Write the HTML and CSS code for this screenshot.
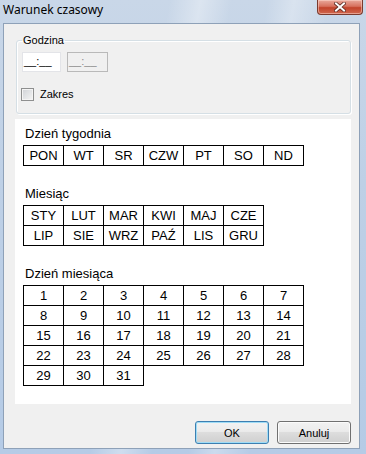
FILE: index.html
```html
<!DOCTYPE html>
<html lang="pl">
<head>
    <meta charset="UTF-8">
    <meta name="viewport" content="width=device-width, initial-scale=1.0">
    <title>Warunek czasowy</title>
    <link rel="stylesheet" href="styles.css">
</head>
<body>
    <div class="window">
        <div class="titlebar">
            <span class="title">Warunek czasowy</span>
            <button class="close" type="button">
                <svg width="12" height="10" viewBox="0 0 12 10">
                    <path d="M2 1.5 L10 8.5 M10 1.5 L2 8.5" stroke="#5b2a22" stroke-width="3.6" stroke-linecap="square" fill="none"/>
                    <path d="M2 1.5 L10 8.5 M10 1.5 L2 8.5" stroke="#ffffff" stroke-width="2" stroke-linecap="square" fill="none"/>
                </svg>
            </button>
        </div>
        <div class="client">
            <fieldset class="group">
                <legend>Godzina</legend>
                <div class="times">
                    <div class="time-input">__:__</div>
                    <div class="time-input disabled">__:__</div>
                </div>
                <label class="check"><span class="check-box"></span>Zakres</label>
            </fieldset>

            <div class="panel">
                <div class="caption">Dzień tygodnia</div>
                <table class="grid">
                    <tr><td>PON</td><td>WT</td><td>SR</td><td>CZW</td><td>PT</td><td>SO</td><td>ND</td></tr>
                </table>

                <div class="caption">Miesiąc</div>
                <table class="grid">
                    <tr><td>STY</td><td>LUT</td><td>MAR</td><td>KWI</td><td>MAJ</td><td>CZE</td></tr>
                    <tr><td>LIP</td><td>SIE</td><td>WRZ</td><td>PAŹ</td><td>LIS</td><td>GRU</td></tr>
                </table>

                <div class="caption">Dzień miesiąca</div>
                <table class="grid">
                    <tr><td>1</td><td>2</td><td>3</td><td>4</td><td>5</td><td>6</td><td>7</td></tr>
                    <tr><td>8</td><td>9</td><td>10</td><td>11</td><td>12</td><td>13</td><td>14</td></tr>
                    <tr><td>15</td><td>16</td><td>17</td><td>18</td><td>19</td><td>20</td><td>21</td></tr>
                    <tr><td>22</td><td>23</td><td>24</td><td>25</td><td>26</td><td>27</td><td>28</td></tr>
                    <tr><td>29</td><td>30</td><td>31</td></tr>
                </table>
            </div>

            <div class="buttons">
                <button class="btn default" type="button">OK</button>
                <button class="btn" type="button">Anuluj</button>
            </div>
        </div>
    </div>
</body>
</html>
```

FILE: styles.css
```css
* {
    box-sizing: border-box;
}

body {
    margin: 0;
    font-family: 'Liberation Sans', Arial, sans-serif;
    background: #bcd0e6;
}

.window {
    width: 366px;
    height: 454px;
    display: flex;
    flex-direction: column;
    background:
        linear-gradient(100deg, transparent 38%, rgba(255, 255, 255, 0.35) 45%, transparent 52%, transparent 60%, rgba(255, 255, 255, 0.3) 66%, transparent 74%),
        linear-gradient(#c9d7e8, #bed0e6 40%, #b5cbe6);
}

.titlebar {
    height: 23px;
    display: flex;
    align-items: flex-start;
}

.titlebar > .title {
    font-family: 'Noto Sans', sans-serif;
    font-size: 12px;
    line-height: 16px;
    padding: 2px 0 0 3px;
    color: #000;
}

.titlebar > .close {
    margin: 0 3px 0 auto;
    width: 46px;
    height: 15px;
    padding: 0;
    display: flex;
    align-items: center;
    justify-content: center;
    border: 1px solid #7b3a2e;
    border-top: none;
    border-radius: 0 0 4px 4px;
    background: linear-gradient(#e9a99c, #d7715e 45%, #c2432b 55%, #d0684f);
    box-shadow: inset 0 0 0 1px rgba(255, 220, 210, 0.5);
}

.client {
    flex: 1;
    margin: 0 6px 5px 3px;
    border: 1px solid #8ea1b8;
    background: #f0f0f0;
    display: flex;
    flex-direction: column;
}

/* group box */
.group {
    margin: 10px 8px 0 12px;
    padding: 5px 5px 12px 5px;
    border: 1px solid #d5dfe5;
    border-radius: 3px;
    box-shadow: inset 1px 1px 0 #fff, 1px 1px 0 #fff;
    font-size: 11px;
    min-width: 0;
}

.group > legend {
    padding: 0 1px;
    line-height: 13px;
    color: #000;
}

.times {
    display: flex;
    gap: 6px;
}

.time-input {
    width: 39px;
    height: 20px;
    border: 1px solid #e3e4e8;
    background: #fff;
    line-height: 17px;
    padding-left: 1px;
    color: #000;
}

.time-input.disabled {
    width: 41px;
    border-color: #b9b9b9;
    background: #f0f0f0;
    color: #8a8a8a;
}

.check {
    display: flex;
    align-items: center;
    gap: 6px;
    margin: 16px 0 0 -1px;
    line-height: 13px;
}

.check-box {
    width: 13px;
    height: 13px;
    border: 1px solid #8e8f8f;
    background: linear-gradient(135deg, #cfd2d6, #f5f5f5);
    box-shadow: inset 0 0 0 1px #f4f4f4;
}

/* white panel with tables */
.panel {
    margin: 5px 8px 0 11px;
    padding: 7px 8px 18px 8px;
    background: #fff;
}

.caption {
    font-size: 13px;
    line-height: 15px;
    padding-left: 2px;
    margin: 20px 0 4px 0;
}

.caption:first-child {
    margin-top: 0;
}

.grid {
    border-collapse: collapse;
    font-size: 13px;
}

.grid td {
    width: 40px;
    height: 20px;
    padding: 0;
    border: 1px solid #000;
    text-align: center;
    line-height: 18px;
}

/* buttons */
.buttons {
    display: flex;
    justify-content: flex-end;
    gap: 8px;
    margin: auto 8px 4px 0;
}

.btn {
    width: 74px;
    height: 23px;
    padding: 0;
    font-family: 'Liberation Sans', Arial, sans-serif;
    font-size: 11px;
    color: #000;
    border: 1px solid #707070;
    border-radius: 3px;
    background: linear-gradient(#f2f2f2, #ebebeb 45%, #dddddd 50%, #cfcfcf);
    box-shadow: inset 0 0 0 1px #fbfbfb;
}

.btn.default {
    border-color: #3c7fb1;
    box-shadow: inset 0 0 0 1px #9fdcf6;
}
```
